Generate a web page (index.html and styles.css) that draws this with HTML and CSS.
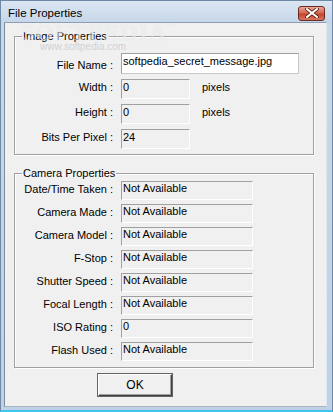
FILE: index.html
```html
<!DOCTYPE html>
<html lang="en">
<head>
    <meta charset="UTF-8">
    <title>File Properties</title>
    <link rel="stylesheet" href="styles.css">
</head>
<body>
    <div class="window">
        <div class="title-bar">
            <span class="title">File Properties</span>
            <span class="watermark">SOFTPEDIA<sup>™</sup></span>
            <button class="close-btn" aria-label="Close">
                <svg width="14" height="10" viewBox="0 0 14 10">
                    <path d="M2 1 L12 9 M12 1 L2 9" stroke="#5a1a10" stroke-width="3.6" stroke-linecap="square"/>
                    <path d="M2 1 L12 9 M12 1 L2 9" stroke="#ffffff" stroke-width="2" stroke-linecap="square"/>
                </svg>
            </button>
        </div>

        <div class="client">
            <fieldset class="group group-image">
                <legend>Image Properties</legend>
                <span class="watermark-small">www.softpedia.com</span>
                <div class="rows">
                    <div class="row row-name">
                        <label>File Name :</label>
                        <div class="field field-edit field-wide">softpedia_secret_message.jpg</div>
                    </div>
                    <div class="row">
                        <label>Width :</label>
                        <div class="field field-small">0</div>
                        <span class="unit">pixels</span>
                    </div>
                    <div class="row">
                        <label>Height :</label>
                        <div class="field field-small">0</div>
                        <span class="unit">pixels</span>
                    </div>
                    <div class="row">
                        <label>Bits Per Pixel :</label>
                        <div class="field field-small">24</div>
                    </div>
                </div>
            </fieldset>

            <fieldset class="group group-camera">
                <legend>Camera Properties</legend>
                <div class="rows rows-tight">
                    <div class="row"><label>Date/Time Taken :</label><div class="field field-mid">Not Available</div></div>
                    <div class="row"><label>Camera Made :</label><div class="field field-mid">Not Available</div></div>
                    <div class="row"><label>Camera Model :</label><div class="field field-mid">Not Available</div></div>
                    <div class="row"><label>F-Stop :</label><div class="field field-mid">Not Available</div></div>
                    <div class="row"><label>Shutter Speed :</label><div class="field field-mid">Not Available</div></div>
                    <div class="row"><label>Focal Length :</label><div class="field field-mid">Not Available</div></div>
                    <div class="row"><label>ISO Rating :</label><div class="field field-mid">0</div></div>
                    <div class="row"><label>Flash Used :</label><div class="field field-mid">Not Available</div></div>
                </div>
            </fieldset>

            <div class="buttons">
                <button class="ok-btn">OK</button>
            </div>
        </div>
    </div>
</body>
</html>
```

FILE: styles.css
```css
body {
    margin: 0;
    font-family: "Liberation Sans", Arial, sans-serif;
    font-size: 11px;
    color: #000;
}
.window {
    width: 333px;
    height: 412px;
    box-sizing: border-box;
    background: linear-gradient(to bottom, #c9d9ea 0%, #bfd1e5 100%);
    border: 1px solid #6f8aa6;
    border-bottom: 2px solid #3fc4ee;
    padding: 0 5px 3px 3px;
    display: flex;
    flex-direction: column;
    position: relative;
}
.title-bar {
    height: 21px;
    display: flex;
    align-items: center;
    padding-left: 6px;
    background: linear-gradient(to bottom, #dbe6f2 0%, #c6d7ea 100%);
    margin: 0 -5px 0 -3px;
    padding-right: 6px;
}
.title {
    font-size: 11.5px;
    color: #000;
    margin-top: 3px;
    margin-left: 1px;
}
.watermark {
    position: absolute;
    left: 20px;
    top: 14px;
    z-index: 2;
    font-family: "Liberation Serif", serif;
    font-size: 24px;
    line-height: 22px;
    font-weight: bold;
    color: rgba(255, 255, 255, 0.45);
    text-shadow: 0 0 1px rgba(160, 170, 180, 0.25);
    letter-spacing: 1px;
    pointer-events: none;
}
.watermark sup {
    font-size: 7px;
    vertical-align: 12px;
}
.close-btn {
    margin-left: auto;
    width: 27px;
    height: 15px;
    margin-top: 3px;
    margin-right: 1px;
    padding: 0;
    border: 1px solid #6b2a22;
    border-radius: 3px;
    background: linear-gradient(to bottom, #e9a99a 0%, #d46a52 45%, #c4452b 55%, #d6785e 100%);
    display: flex;
    align-items: center;
    justify-content: center;
}
.client {
    flex: 1;
    background: #f0f0f0;
    border-top: 1px solid #8c9fb3;
    border-left: 1px solid #7f8c99;
    border-right: 1px solid #dfe7ef;
    border-bottom: 1px solid #a8b4c0;
    padding: 7px 12px 0 9px;
    display: flex;
    flex-direction: column;
}
.group {
    box-sizing: border-box;
    margin: 0;
    padding: 0;
    border: 1px solid #a0a0a0;
    box-shadow: inset 1px 1px 0 #fff, 1px 1px 0 #fff;
    position: relative;
}
.group legend {
    margin-left: 7px;
    padding: 0 1px 0 1px;
    font-size: 11px;
    line-height: 13px;
}
.group-image {
    height: 125px;
}
.group-camera {
    margin-top: 12px;
    height: 201px;
}
.watermark-small {
    position: absolute;
    left: 25px;
    top: -1px;
    font-size: 10px;
    line-height: 10px;
    color: rgba(200, 200, 200, 0.8);
}
.rows {
    display: flex;
    flex-direction: column;
    gap: 5px;
    padding-top: 10px;
}
.rows-tight {
    gap: 4px;
    padding-top: 1px;
}
.row {
    display: flex;
    align-items: flex-start;
}
.row label {
    width: 98px;
    text-align: right;
    padding-top: 2px;
    margin-right: 8px;
}
.row-name label {
    padding-top: 6px;
}
.field {
    height: 17px;
    box-sizing: content-box;
    padding: 1px 2px 0 1px;
    border: 1px solid #a0a0a0;
    border-right-color: #fff;
    border-bottom-color: #fff;
    line-height: 13px;
    white-space: nowrap;
}
.rows-tight .field {
    height: 17px;
    padding-top: 0;
}
.field-edit {
    background: #fff;
    border-color: #c8c8c8;
    border-left-color: #a0a0a0;
    border-top-color: #a0a0a0;
    height: 18px;
    padding-top: 1px;
}
.field-wide {
    width: 173px;
}
.field-small {
    width: 64px;
}
.field-mid {
    width: 127px;
}
.unit {
    margin-left: 12px;
    padding-top: 2px;
}
.buttons {
    display: flex;
    padding-left: 84px;
    margin-top: 6px;
}
.ok-btn {
    width: 74px;
    height: 22px;
    font-family: "Liberation Sans", Arial, sans-serif;
    font-size: 12px;
    background: #f0f0f0;
    border: 1px solid #fff;
    border-right-color: #404040;
    border-bottom-color: #404040;
    box-shadow: inset -1px -1px 0 #a0a0a0, 0 0 0 1px #646464;
    padding: 0;
}
```
